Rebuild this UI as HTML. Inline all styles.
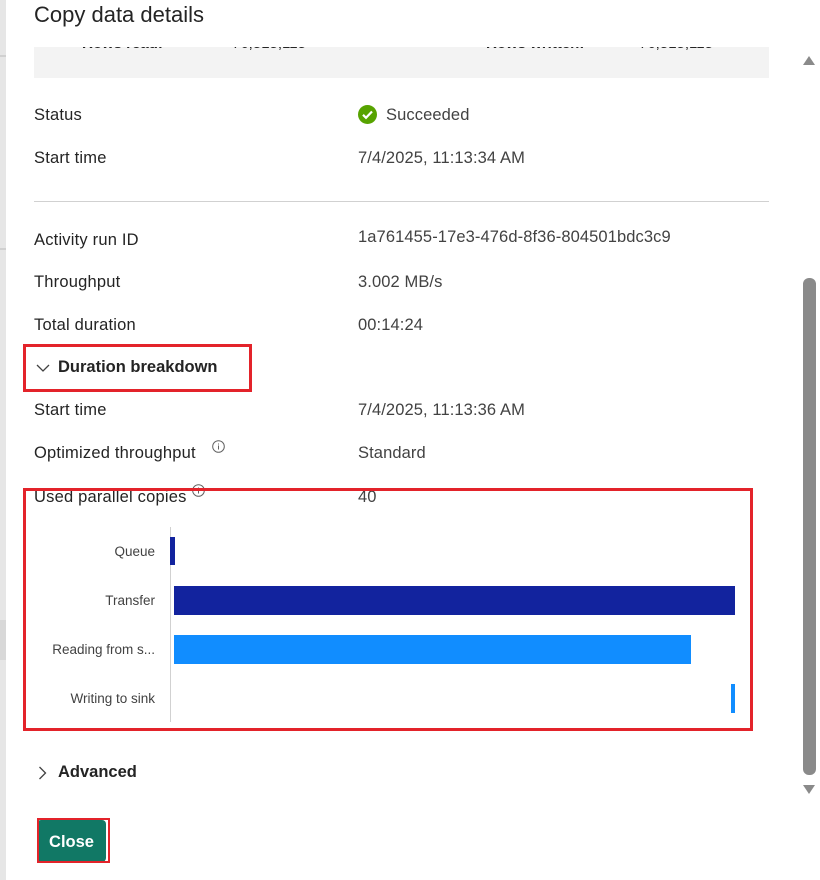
<!DOCTYPE html>
<html><head><meta charset="utf-8"><style>
*{margin:0;padding:0;box-sizing:border-box}
body{width:820px;height:880px;overflow:hidden;background:#fff;font-family:"Segoe UI","Liberation Sans",sans-serif;color:#242424;position:relative}
.a{position:absolute;white-space:nowrap}
.l{font-size:16.5px;color:#242424;letter-spacing:0.2px}
.v{font-size:16.5px;color:#424242;letter-spacing:0.1px}
.c{font-size:13.5px;color:#424242;text-align:right;width:150px}
</style></head><body>
<div class="a" style="left:0;top:0;width:6px;height:880px;background:#e6e6e6"></div>
<div class="a" style="left:0;top:55px;width:6px;height:2px;background:#d0d0d0"></div>
<div class="a" style="left:0;top:248px;width:6px;height:2px;background:#d0d0d0"></div>
<div class="a" style="left:0;top:620px;width:6px;height:40px;background:#d8d8d8"></div>
<div class="a" style="left:34px;top:2px;font-size:22px;color:#242424">Copy data details</div>
<div class="a" style="left:34px;top:47px;width:735px;height:31px;background:#f3f3f3;overflow:hidden">
 <div class="a" style="left:48px;top:-12px;font-size:15px;font-weight:600">Rows read:</div>
 <div class="a" style="left:198px;top:-12px;font-size:15px">76,515,115</div>
 <div class="a" style="left:452px;top:-12px;font-size:15px;font-weight:600">Rows written: &nbsp;&nbsp;</div>
 <div class="a" style="left:605px;top:-12px;font-size:15px">76,515,115</div>
</div>
<div class="a" style="left:803px;top:56px;width:0;height:0;border-left:6px solid transparent;border-right:6px solid transparent;border-bottom:9px solid #8a8a8a"></div>
<div class="a" style="left:803px;top:785px;width:0;height:0;border-left:6px solid transparent;border-right:6px solid transparent;border-top:9px solid #8a8a8a"></div>
<div class="a" style="left:803px;top:278px;width:13px;height:497px;background:#8a8a8a;border-radius:6px"></div>

<div class="a l" style="left:34px;top:106px">Status</div>
<svg class="a" style="left:358px;top:105px" width="19" height="19" viewBox="0 0 19 19"><circle cx="9.5" cy="9.5" r="9.5" fill="#57a300"/><path d="M5 9.8l3 3 6-6.3" stroke="#fff" stroke-width="2.2" fill="none"/></svg>
<div class="a v" style="left:386px;top:106px">Succeeded</div>
<div class="a l" style="left:34px;top:149px">Start time</div>
<div class="a v" style="left:358px;top:149px">7/4/2025, 11:13:34 AM</div>
<div class="a" style="left:34px;top:201px;width:735px;height:1px;background:#d1d1d1"></div>
<div class="a l" style="left:34px;top:231px">Activity run ID</div>
<div class="a v" style="left:358px;top:228px">1a761455-17e3-476d-8f36-804501bdc3c9</div>
<div class="a l" style="left:34px;top:273px">Throughput</div>
<div class="a v" style="left:358px;top:273px">3.002 MB/s</div>
<div class="a l" style="left:34px;top:316px">Total duration</div>
<div class="a v" style="left:358px;top:316px">00:14:24</div>
<div class="a" style="left:23px;top:344px;width:229px;height:48px;border:3px solid #e3232a"></div>
<svg class="a" style="left:36px;top:364px" width="14" height="9"><path d="M1 1l6 6 6-6" stroke="#424242" stroke-width="1.3" fill="none"/></svg>
<div class="a" style="left:58px;top:358px;font-size:16.5px;font-weight:600">Duration breakdown</div>
<div class="a l" style="left:34px;top:401px">Start time</div>
<div class="a v" style="left:358px;top:401px">7/4/2025, 11:13:36 AM</div>
<div class="a l" style="left:34px;top:444px">Optimized throughput</div>
<svg class="a" style="left:212px;top:440px" width="13" height="13"><circle cx="6.5" cy="6.5" r="5.8" stroke="#616161" fill="none"/><path d="M6.5 5.5v4M6.5 3.5v1" stroke="#616161"/></svg>
<div class="a v" style="left:358px;top:444px">Standard</div>
<div class="a l" style="left:34px;top:488px">Used parallel copies</div>
<svg class="a" style="left:192px;top:484px" width="13" height="13"><circle cx="6.5" cy="6.5" r="5.8" stroke="#616161" fill="none"/><path d="M6.5 5.5v4M6.5 3.5v1" stroke="#616161"/></svg>
<div class="a v" style="left:358px;top:488px">40</div>
<div class="a" style="left:23px;top:488px;width:730px;height:243px;border:3px solid #e3232a"></div>
<div class="a" style="left:170px;top:527px;width:1px;height:195px;background:#d1d1d1"></div>
<div class="a c" style="left:5px;top:544px">Queue</div>
<div class="a c" style="left:5px;top:593px">Transfer</div>
<div class="a c" style="left:5px;top:642px">Reading from s...</div>
<div class="a c" style="left:5px;top:691px">Writing to sink</div>
<div class="a" style="left:170px;top:537px;width:5px;height:28px;background:#12239e"></div>
<div class="a" style="left:174px;top:586px;width:561px;height:29px;background:#12239e"></div>
<div class="a" style="left:174px;top:635px;width:517px;height:29px;background:#118dff"></div>
<div class="a" style="left:731px;top:684px;width:4px;height:29px;background:#118dff"></div>
<svg class="a" style="left:38px;top:766px" width="9" height="14"><path d="M1.5 1l6 6-6 6" stroke="#424242" stroke-width="1.3" fill="none"/></svg>
<div class="a" style="left:58px;top:763px;font-size:16.5px;font-weight:600">Advanced</div>
<div class="a" style="left:37px;top:820px;width:69px;height:42px;background:#117865;border-radius:4px"></div>
<div class="a" style="left:37px;top:818px;width:73px;height:45px;border:2px solid #e3232a"></div>
<div class="a" style="left:37px;top:833px;width:69px;text-align:center;font-size:16.5px;font-weight:600;color:#fff">Close</div>
</body></html>
